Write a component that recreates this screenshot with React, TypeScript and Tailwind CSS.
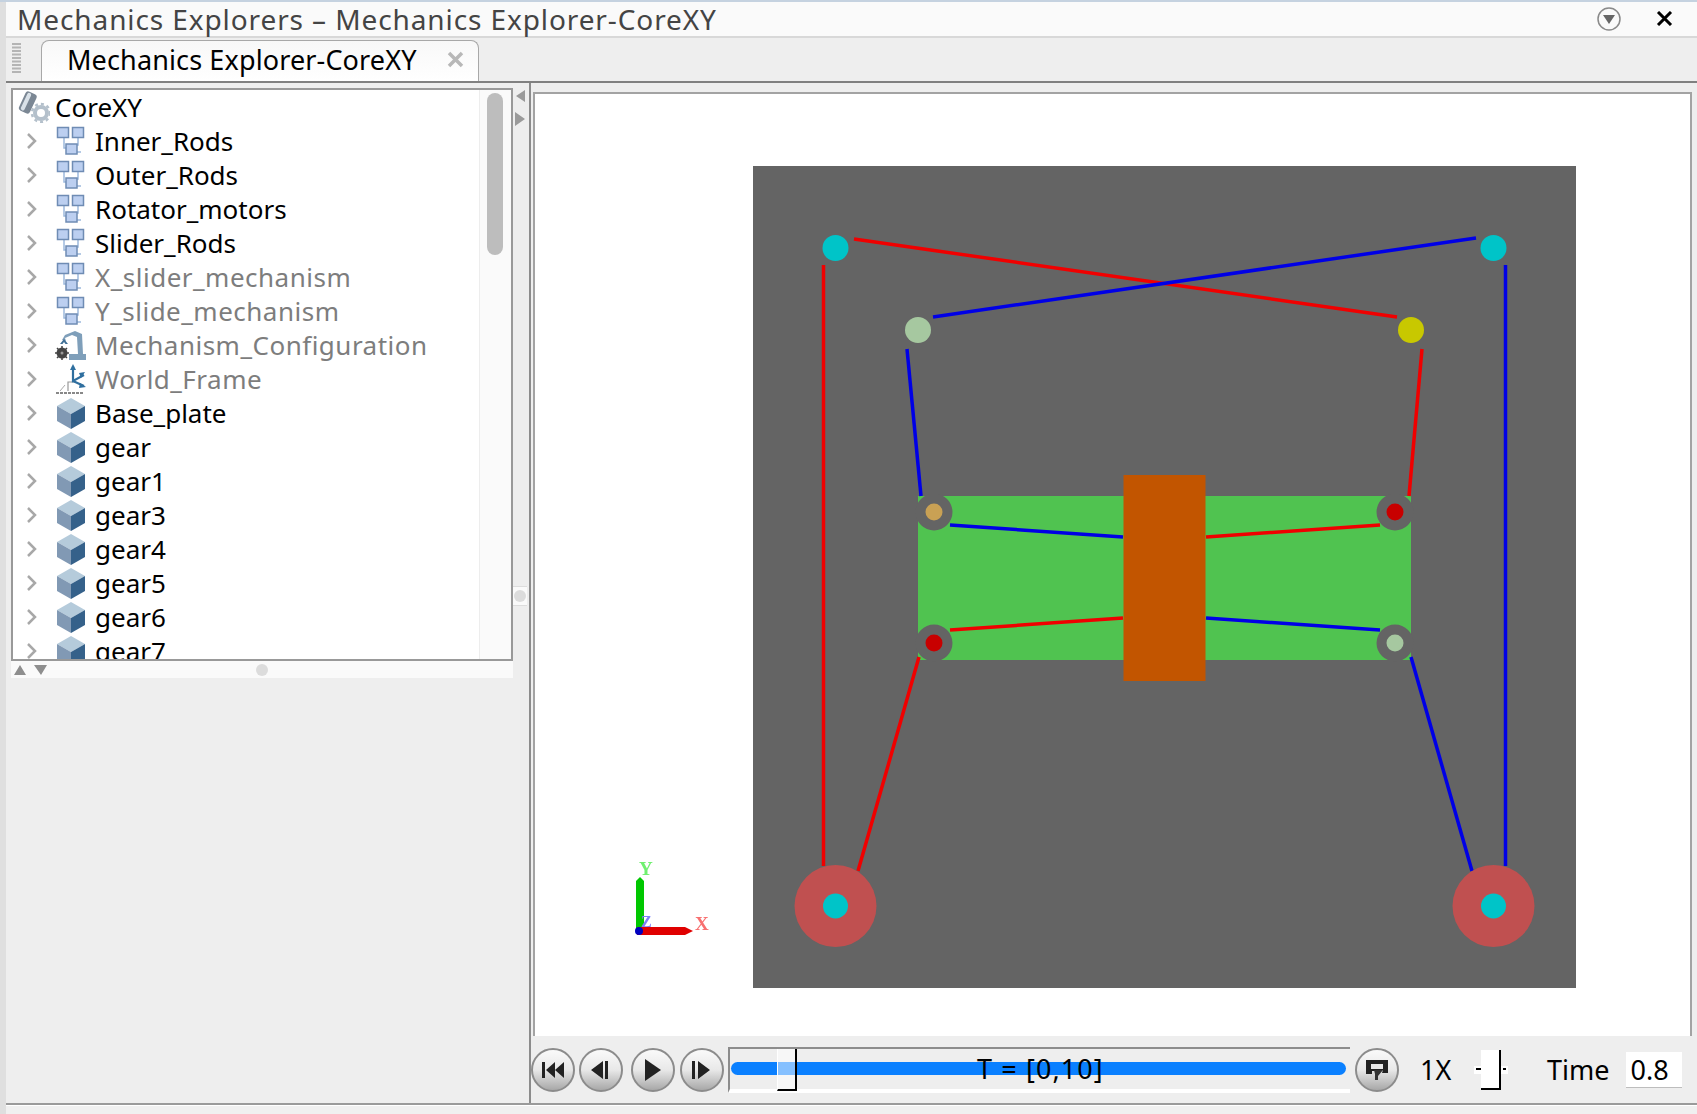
const font = { fontFamily: '"Noto Sans", "Open Sans", sans-serif' }

type Kind = "group" | "config" | "frame" | "solid"

const rows: { name: string; kind: Kind; muted?: boolean }[] = [
    { name: "Inner_Rods", kind: "group" },
    { name: "Outer_Rods", kind: "group" },
    { name: "Rotator_motors", kind: "group" },
    { name: "Slider_Rods", kind: "group" },
    { name: "X_slider_mechanism", kind: "group", muted: true },
    { name: "Y_slide_mechanism", kind: "group", muted: true },
    { name: "Mechanism_Configuration", kind: "config", muted: true },
    { name: "World_Frame", kind: "frame", muted: true },
    { name: "Base_plate", kind: "solid" },
    { name: "gear", kind: "solid" },
    { name: "gear1", kind: "solid" },
    { name: "gear3", kind: "solid" },
    { name: "gear4", kind: "solid" },
    { name: "gear5", kind: "solid" },
    { name: "gear6", kind: "solid" },
    { name: "gear7", kind: "solid" },
]

function GroupIcon() {
    return (
        <svg width="30" height="30" viewBox="0 0 30 30">
            <path d="M8 11v11h5M22 11v8h-5M17 26h8" fill="none" stroke="#9db9dd" strokeWidth="1.5" />
            <rect x="1.5" y="1.5" width="11" height="10" fill="#bccff0" stroke="#6f8cb4" strokeWidth="1.5" />
            <rect x="16.5" y="1.5" width="11" height="10" fill="#bccff0" stroke="#6f8cb4" strokeWidth="1.5" />
            <rect x="10" y="18" width="11" height="10" fill="#bccff0" stroke="#6f8cb4" strokeWidth="1.5" />
        </svg>
    )
}

function ConfigIcon() {
    return (
        <svg width="32" height="32" viewBox="0 0 32 32">
            <path d="M7 11l3-5 10-4 7 3 1 20h3v6H14v-6h9l-1-17-5-2-7 3 1 3z" fill="#7f9fba" />
            <path d="M5 15l4-5 4 5h-2.5L9 13l-1.500 2z" fill="#3f6f95" />
            <circle cx="7" cy="24" r="5.500" fill="#444" />
            <path d="M7 17v14M0 24h14M2 19l10 10M12 19L2 29" stroke="#444" strokeWidth="1.500" />
            <circle cx="7" cy="24" r="1.500" fill="#999" />
        </svg>
    )
}

function FrameIcon() {
    return (
        <svg width="32" height="32" viewBox="0 0 32 32">
            <path d="M1 30h28" stroke="#888" strokeWidth="2" strokeDasharray="3 1" />
            <path d="M13 28v-9h8" fill="none" stroke="#999" strokeWidth="1.200" />
            <path d="M5 28l5-6" stroke="#aaa" strokeWidth="1" />
            <path d="M18 3v15l11-6M18 18l11 5" fill="none" stroke="#2f6f9f" strokeWidth="2.200" />
            <path d="M18 1l-3 6h6zM30 9l-6 1 2 5zM31 24l-6-4-1 5z" fill="#2f6f9f" />
        </svg>
    )
}

function SolidIcon() {
    return (
        <svg width="30" height="32" viewBox="0 0 30 32">
            <path d="M15 1l14 8-14 8L1 9z" fill="#b5cbdb" />
            <path d="M1 9l14 8v15L1 24z" fill="#8199b4" />
            <path d="M29 9L15 17v15l14-8z" fill="#35618a" />
        </svg>
    )
}

function TreeIcon({ kind }: { kind: Kind }) {
    if (kind === "group") return <GroupIcon />
    if (kind === "config") return <ConfigIcon />
    if (kind === "frame") return <FrameIcon />
    return <SolidIcon />
}

function RootIcon() {
    return (
        <svg width="32" height="32" viewBox="0 0 32 32">
            <g transform="rotate(25 10 11)">
                <rect x="4" y="1" width="12" height="21" rx="3" fill="#7b8794" />
                <rect x="6" y="2" width="4" height="19" rx="2" fill="#d9e1e8" />
            </g>
            <circle cx="23" cy="22" r="6" fill="none" stroke="#b4c0cb" strokeWidth="4" />
            <circle cx="23" cy="22" r="9" fill="none" stroke="#b4c0cb" strokeWidth="2.500" strokeDasharray="3 3" />
        </svg>
    )
}

function Chevron() {
    return (
        <svg width="12" height="18" viewBox="0 0 12 18">
            <path d="M2 2l7 7-7 7" fill="none" stroke="#a8a8a8" strokeWidth="2.5" />
        </svg>
    )
}

function TreeRow({ name, kind, muted }: { name: string; kind: Kind; muted?: boolean }) {
    return (
        <div className="flex h-[34px] items-center shrink-0">
            <div className="flex w-[38px] justify-center"><Chevron /></div>
            <div className="ml-[4px] flex w-[32px] justify-center"><TreeIcon kind={kind} /></div>
            <span className={`ml-[8px] text-[26px] leading-none ${muted ? "tracking-[0.5px] text-[#7d7d7d]" : "text-black"}`}>{name}</span>
        </div>
    )
}

function RoundButton({ children }: { children: React.ReactNode }) {
    return (
        <div className="flex h-[44px] w-[44px] shrink-0 items-center justify-center rounded-full border-2 border-[#8c8c8c] bg-linear-to-b from-[#fafafa] via-[#e8e8e8] to-[#a8a8a8]">
            {children}
        </div>
    )
}

function Scene() {
    const segs: [number, number, number, number, string][] = [
        [823.5, 265, 823.5, 866, "#f00000"],
        [1505.5, 265, 1505.5, 866, "#0000e6"],
        [854, 239, 1397, 317, "#f00000"],
        [1476, 238, 933, 317, "#0000e6"],
        [907, 349, 921, 496, "#0000e6"],
        [1422, 349, 1409, 496, "#f00000"],
        [950, 525, 1123, 537, "#0000e6"],
        [1206, 537, 1380, 525, "#f00000"],
        [950, 630, 1123, 618, "#f00000"],
        [1206, 618, 1380, 630, "#0000e6"],
        [919, 657, 858, 871, "#f00000"],
        [1411, 657, 1472, 871, "#0000e6"],
    ]
    return (
        <svg className="block h-[942px] w-[1153px] blur-[0.4px]" viewBox="535 94 1153 942">
            <rect x="753" y="166" width="823" height="822" fill="#646464" />
            <rect x="918" y="496" width="493" height="164" fill="#50c350" />
            {[[934, 512, "#c9a154"], [1395, 512, "#c80000"], [934, 643, "#c80000"], [1395, 643, "#a6c8a0"]].map(([x, y, c]) => (
                <g key={`${x}-${y}`}>
                    <circle cx={x} cy={y} r="18.500" fill="#646464" />
                    <circle cx={x} cy={y} r="8.500" fill={c as string} />
                </g>
            ))}
            <rect x="1123.500" y="475" width="82" height="206" fill="#c25500" />
            {segs.map(([a, b, c, d, col]) => (
                <line key={`${a}-${b}`} x1={a} y1={b} x2={c} y2={d} stroke={col} strokeWidth="3.500" />
            ))}
            <circle cx="835.500" cy="248" r="13" fill="#00c4c8" />
            <circle cx="1493.500" cy="248" r="13" fill="#00c4c8" />
            <circle cx="918" cy="330" r="13" fill="#a6c8a0" />
            <circle cx="1411" cy="330" r="13" fill="#c8c800" />
            <circle cx="835.500" cy="906" r="41" fill="#c05050" />
            <circle cx="1493.500" cy="906" r="41" fill="#c05050" />
            <circle cx="835.500" cy="906" r="12.500" fill="#00c4c8" />
            <circle cx="1493.500" cy="906" r="12.500" fill="#00c4c8" />
            <g className="blur-[0.6px]">
                <path d="M636 931v-50l4-4 4 4v50z" fill="#00c800" />
                <path d="M637 927h48l8 4-8 4h-48z" fill="#e00000" />
                <circle cx="639" cy="931" r="4" fill="#0000c0" />
                <text x="639" y="875" fontFamily="Liberation Serif" fontSize="19" fontWeight="bold" fill="#70f070">Y</text>
                <text x="695" y="930" fontFamily="Liberation Serif" fontSize="19" fontWeight="bold" fill="#f87070">X</text>
                <text x="641" y="927" fontFamily="Liberation Serif" fontSize="16" fontWeight="bold" fill="#8080f8">Z</text>
            </g>
        </svg>
    )
}

export default function App() {
    return (
        <div className="flex h-[1114px] w-[1697px] overflow-hidden bg-[#eeeeee]" style={font}>
            <div className="w-[6px] shrink-0 border-t-2 border-[#c5d2e0] bg-[#dfdfdf]" />
            <div className="flex min-w-0 flex-1 flex-col">
                {/* title bar */}
                <div className="flex h-[38px] shrink-0 items-center border-t-2 border-b-2 border-t-[#c5d2e0] border-b-[#d8d8d8] bg-[#fafafa] pb-[1px] pl-[11px] text-[28px] leading-none tracking-[0.9px] text-[#444444]">
                    <span className="flex-1">Mechanics Explorers – Mechanics Explorer-CoreXY</span>
                    <svg className="mr-[34px]" width="26" height="26" viewBox="0 0 26 26">
                        <circle cx="13" cy="13" r="11" fill="none" stroke="#8a8a8a" strokeWidth="1.500" />
                        <path d="M7 9h12l-6 9z" fill="#666" />
                    </svg>
                    <svg className="mr-[24px]" width="17" height="15" viewBox="0 0 17 15">
                        <path d="M2 1l13 13M15 1L2 14" stroke="#000" strokeWidth="3" />
                    </svg>
                </div>

                {/* tab strip */}
                <div className="flex h-[45px] shrink-0 items-end border-b-2 border-[#808080] pl-[6px]">
                    <svg className="mb-[8px] mr-[20px]" width="9" height="30" viewBox="0 0 9 30">
                        <path d="M4.500 0v30" stroke="#b4b4b4" strokeWidth="9" strokeDasharray="2 1.500" />
                    </svg>
                    <div className="flex h-[41px] w-[438px] items-center rounded-t-lg border border-b-0 border-[#a8a8a8] bg-linear-to-b from-[#f8f8f8] to-white pb-[3px] pl-[25px] text-[27px] leading-none tracking-[0.13px] text-black">
                        <span className="flex-1">Mechanics Explorer-CoreXY</span>
                        <svg className="mr-[13px]" width="19" height="19" viewBox="0 0 19 19">
                            <path d="M3 3l13 13M16 3L3 16" stroke="#b8b8b8" strokeWidth="3.500" />
                        </svg>
                    </div>
                </div>

                {/* body */}
                <div className="flex min-h-0 flex-1 flex-col">
                    <div className="flex h-[1022px] shrink-0 border-b-2 border-[#9a9a9a]">
                        {/* left side */}
                        <div className="flex w-[507px] shrink-0 flex-col pl-[5px] pt-[5px]">
                            <div className="flex h-[573px] shrink-0 overflow-hidden border-2 border-[#999999] bg-white">
                                <div className="flex min-w-0 flex-1 flex-col border-r border-[#ededed]">
                                    <div className="flex h-[34px] shrink-0 items-center pl-[5px]">
                                        <RootIcon />
                                        <span className="ml-[5px] text-[26px] leading-none text-black">CoreXY</span>
                                    </div>
                                    {rows.map((r) => <TreeRow key={r.name} {...r} />)}
                                </div>
                                <div className="w-[31px] shrink-0 bg-[#fafafa] pl-[7px] pt-[3px]">
                                    <div className="h-[162px] w-[16px] rounded-full bg-[#bdbdbd]" />
                                </div>
                            </div>
                            <div className="flex h-[17px] shrink-0 items-center bg-[#fafafa] pl-[2px]">
                                <svg width="35" height="14" viewBox="0 0 35 14">
                                    <path d="M7 2l6 10H1zM21 2h13l-6 10z" fill="#8e8e8e" />
                                </svg>
                                <div className="ml-[208px] h-[12px] w-[12px] rounded-full bg-[#dcdcdc]" />
                            </div>
                        </div>

                        {/* splitter */}
                        <div className="flex w-[16px] shrink-0 flex-col items-center pr-[2px] pt-[6px]">
                            <svg width="12" height="38" viewBox="0 0 12 38">
                                <path d="M11 1v12L2 7zM1 23l10 7-10 7z" fill="#9a9a9a" />
                            </svg>
                            <div className="mt-[459px] flex h-[20px] w-full items-center justify-center border-y border-[#dddddd] bg-[#fafafa]">
                                <div className="h-[12px] w-[12px] rounded-full bg-[#dcdcdc]" />
                            </div>
                        </div>

                        {/* viewer */}
                        <div className="flex min-w-0 flex-1 flex-col border-l-2 border-[#8c8c8c] pr-[5px]">
                            <div className="ml-[2px] mt-[9px] border-t-2 border-r-2 border-l-2 border-[#a3a3a3] bg-white">
                                <Scene />
                            </div>
                            <div className="flex h-[65px] shrink-0 items-center pt-[2px] text-[27px] leading-none text-black">
                                <RoundButton>
                                    <svg className="ml-[3px]" width="26" height="16" viewBox="0 0 26 16"><path d="M0 0h3v16H0zM4 8l9-8v16zM13 8l9-8v16z" fill="#222" /></svg>
                                </RoundButton>
                                <div className="ml-[4px]"><RoundButton>
                                    <svg width="20" height="18" viewBox="0 0 20 18"><path d="M0 9l12-9v18zM14 0h3v18h-3z" fill="#222" /></svg>
                                </RoundButton></div>
                                <div className="ml-[8px]"><RoundButton>
                                    <svg width="18" height="22" viewBox="0 0 18 22"><path d="M1 0l16 11L1 22z" fill="#222" /></svg>
                                </RoundButton></div>
                                <div className="ml-[5px]"><RoundButton>
                                    <svg width="20" height="18" viewBox="0 0 20 18"><path d="M0 0h3v18H0zM6 0l12 9-12 9z" fill="#222" /></svg>
                                </RoundButton></div>
                                <div className="relative ml-[4px] flex h-[46px] w-[622px] shrink-0 items-center border-t-2 border-l-2 border-[#8c8c8c] border-b-4 border-b-white pl-[1px]">
                                    <div className="h-[13px] w-[615px] rounded-full bg-[#0a80ff]" />
                                    <span className="absolute left-[247px] top-[6px] tracking-[1.1px]">T = [0,10]</span>
                                    <div className="absolute left-[47px] top-0 h-[42px] w-[20px] border-r-2 border-b-2 border-black border-l border-l-white bg-white/50" />
                                </div>
                                <div className="ml-[5px]"><RoundButton>
                                    <svg width="24" height="22" viewBox="0 0 24 22">
                                        <path d="M1 1h22v13h-6l1-3-3 1H7v3H1z" fill="#222" />
                                        <path d="M6 5h12v5H6z" fill="#e8e8e8" />
                                        <path d="M9 11h6l3 0-5 6v4h-3v-6z" fill="#333" />
                                    </svg>
                                </RoundButton></div>
                                <span className="ml-[21px] w-[54px]">1X</span>
                                <div className="relative flex h-[40px] w-[34px] shrink-0 items-center">
                                    <div className="h-[8px] w-full bg-white" />
                                    <div className="absolute left-[2px] top-[18px] h-[2px] w-[5px] bg-black" />
                                    <div className="absolute right-[2px] top-[18px] h-[2px] w-[3px] bg-black" />
                                    <div className="absolute left-[7px] top-0 h-[40px] w-[20px] border-r-2 border-b-2 border-black bg-white" />
                                </div>
                                <span className="ml-[39px]">Time</span>
                                <div className="ml-[17px] flex h-[36px] w-[56px] items-center border-b border-[#bdbdbd] bg-white pl-[4px]">0.8</div>
                            </div>
                        </div>
                    </div>
                    <div className="flex-1 border-t border-white bg-[#f0f0f0]" />
                </div>
            </div>
        </div>
    )
}
